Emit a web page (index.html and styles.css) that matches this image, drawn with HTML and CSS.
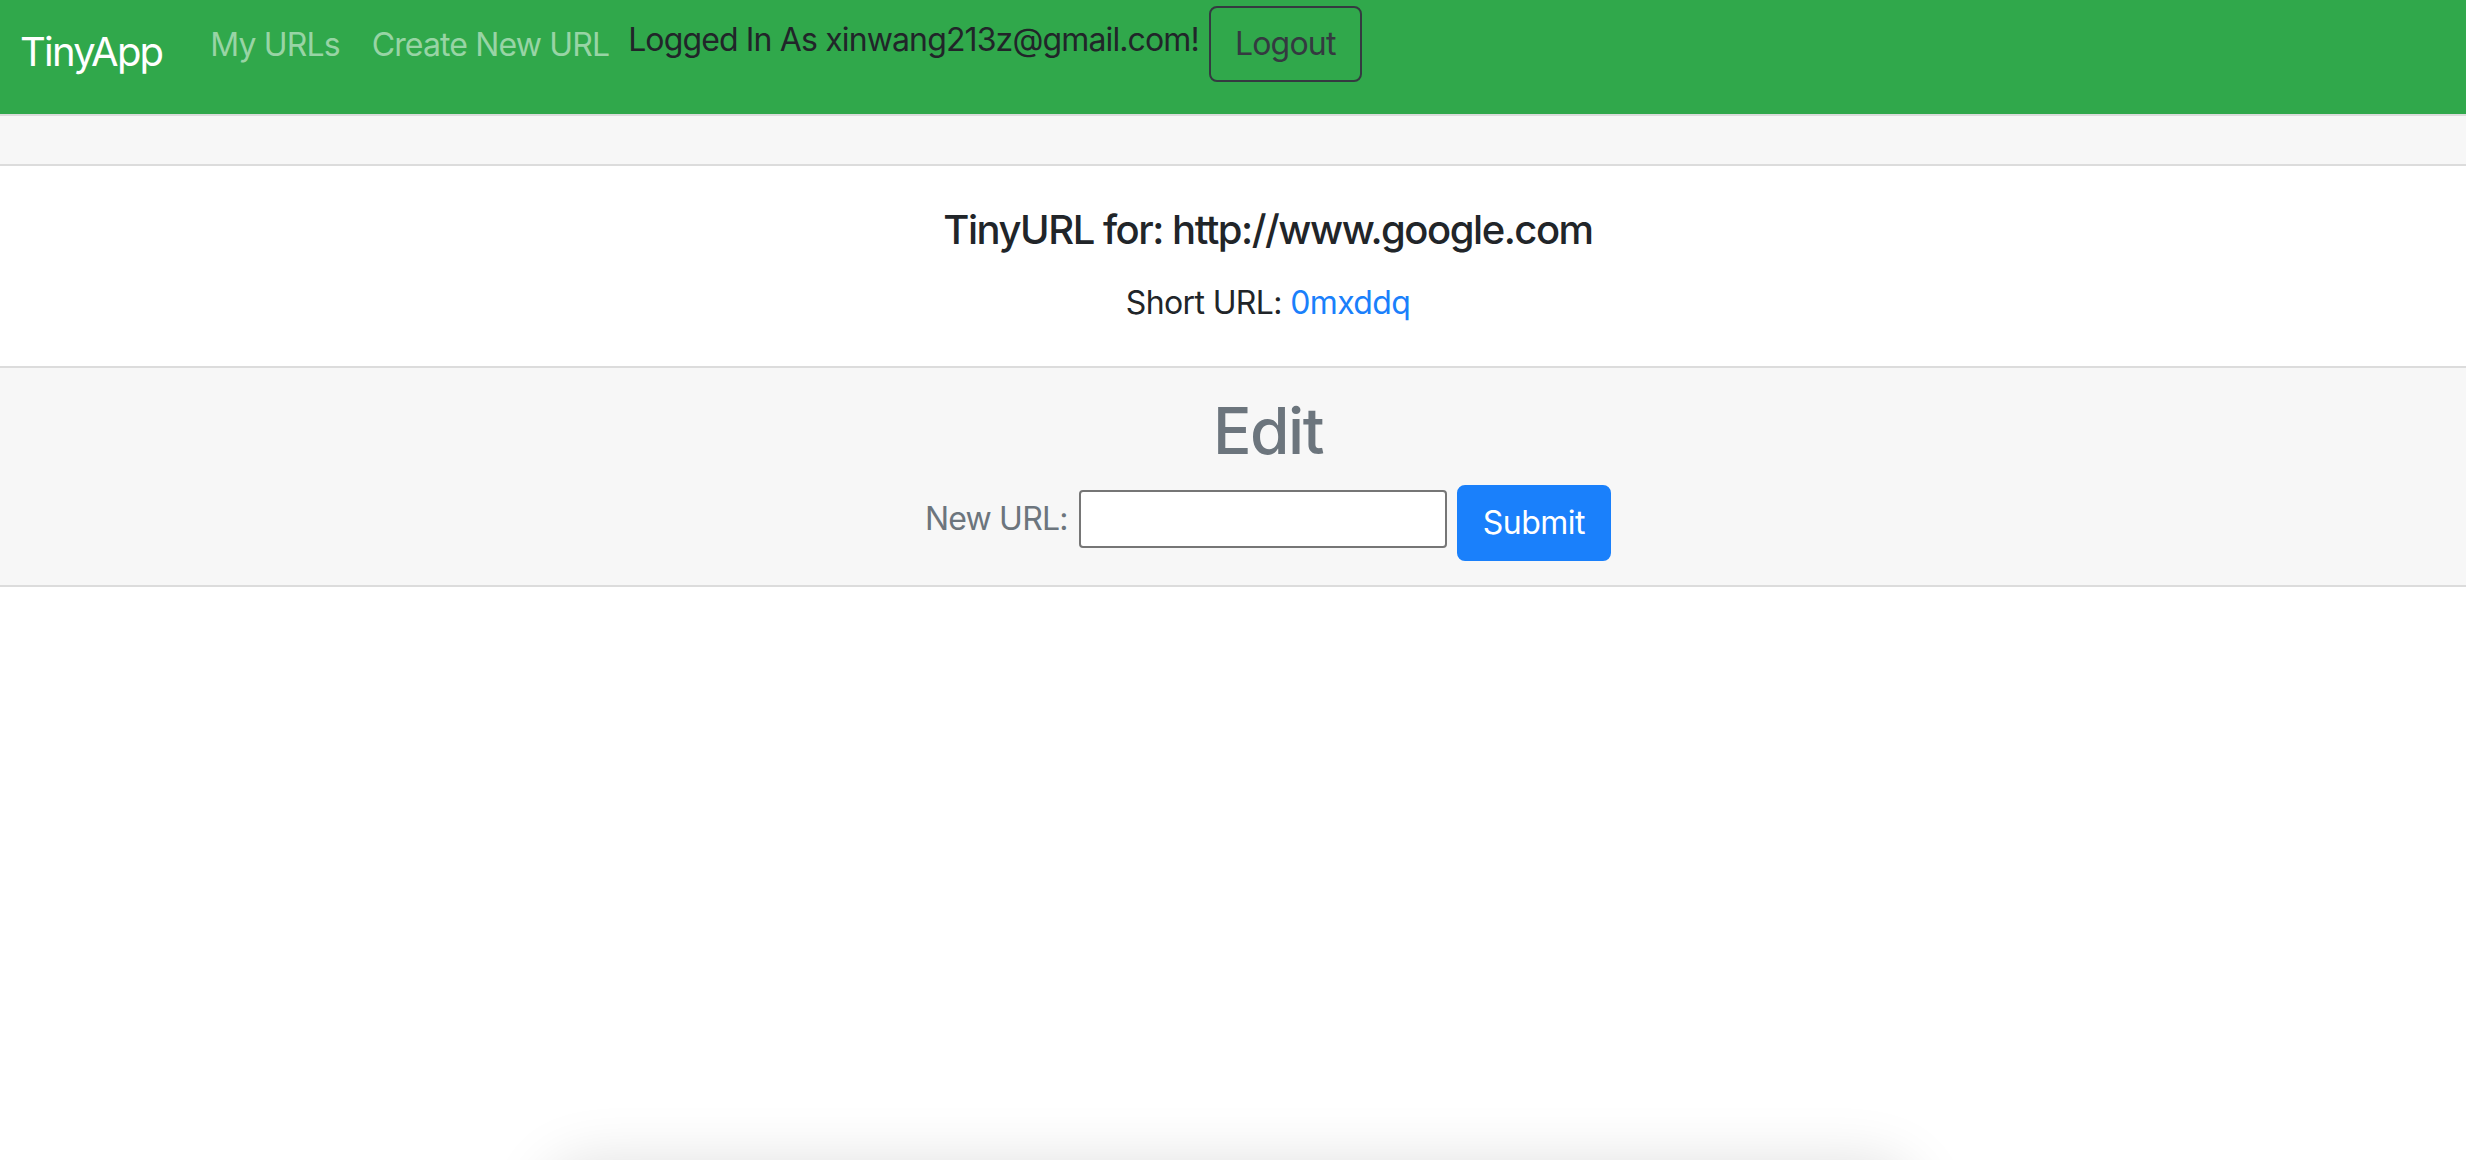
FILE: index.html
```html
<!DOCTYPE html>
<html lang="en">
<head>
<meta charset="utf-8">
<title>TinyApp</title>
<link rel="stylesheet" href="styles.css">
</head>
<body>
<nav class="navbar">
  <a class="brand" href="#">TinyApp</a>
  <a class="nav-link" href="#">My URLs</a>
  <a class="nav-link" href="#">Create New URL</a>
  <span class="logged">Logged In As xinwang213z@gmail.com!</span>
  <form class="logout-form">
    <button class="btn-logout" type="button">Logout</button>
  </form>
</nav>
<main class="card">
  <div class="card-header"></div>
  <div class="card-body">
    <h5 class="card-title">TinyURL for: http://www.google.com</h5>
    <p class="card-text">Short URL: <a class="short-link" href="#">0mxddq</a></p>
  </div>
  <div class="card-footer">
    <h2 class="edit-title">Edit</h2>
    <form class="edit-form">
      <label class="edit-label" for="newurl">New URL:</label>
      <input class="edit-input" id="newurl" type="text">
      <button class="btn-submit" type="button">Submit</button>
    </form>
  </div>
</main>
<div class="window-shadow"></div>
</body>
</html>
```

FILE: styles.css
```css
html, body {
  margin: 0;
  padding: 0;
  background: #ffffff;
  font-family: Inter, "Noto Sans", "Liberation Sans", sans-serif;
  color: #212529;
  overflow: hidden;
}

a { text-decoration: none; }

.navbar {
  display: flex;
  align-items: flex-start;
  height: 114px;
  box-sizing: border-box;
  padding: 0 20px;
  background: #30a84b;
}

.brand {
  font-size: 40px;
  line-height: 60px;
  letter-spacing: -0.045em;
  padding-top: 22px;
  margin-right: 32px;
  color: #ffffff;
}

.nav-link {
  font-size: 32px;
  line-height: 48px;
  letter-spacing: -0.027em;
  padding: 21px 16px 0;
  color: #98d4a5;
}

.logged {
  font-size: 32px;
  line-height: 48px;
  letter-spacing: -0.027em;
  padding-top: 16px;
  margin-left: 3px;
  color: #212529;
}

.logout-form {
  margin: 6px 0 0 10px;
}

.btn-logout {
  font-family: inherit;
  font-size: 32px;
  line-height: 48px;
  letter-spacing: -0.025em;
  padding: 12px 24px;
  border: 2px solid #343a40;
  border-radius: 8px;
  background: transparent;
  color: #343a40;
  cursor: pointer;
}

.card {
  display: block;
  border-top: 2px solid #dcdcdc;
  border-bottom: 2px solid #dcdcdc;
}

.card-header {
  height: 48px;
  background: #f7f7f7;
  border-bottom: 2px solid #dcdcdc;
}

.card-body {
  padding: 40px 40px 39px 110px;
  text-align: center;
  background: #ffffff;
}

.card-title {
  font-size: 40px;
  line-height: 48px;
  font-weight: 500;
  letter-spacing: -0.037em;
  margin: 0 0 25px;
  color: #212529;
}

.card-text {
  font-size: 32px;
  line-height: 48px;
  letter-spacing: -0.02em;
  margin: 0;
}

.short-link {
  color: #1a80fb;
}

.card-footer {
  background: #f7f7f7;
  border-top: 2px solid #dcdcdc;
  padding: 24px 40px 24px 110px;
  text-align: center;
}

.edit-title {
  font-size: 64px;
  line-height: 77px;
  font-weight: 500;
  letter-spacing: -0.024em;
  margin: 0 0 16px;
  color: #6c757d;
}

.edit-form {
  display: flex;
  justify-content: center;
  align-items: flex-start;
  height: 76px;
}

.edit-label {
  font-size: 32px;
  line-height: 48px;
  letter-spacing: -0.025em;
  margin-top: 10px;
  color: #6c757d;
}

.edit-input {
  box-sizing: border-box;
  width: 368px;
  height: 58px;
  margin: 5px 0 0 11px;
  border: 2px solid #767676;
  border-radius: 4px;
  background: #ffffff;
  font-size: 26px;
  padding: 2px 6px;
}

.btn-submit {
  font-family: inherit;
  font-size: 32px;
  line-height: 48px;
  letter-spacing: -0.015em;
  padding: 12px 24px;
  margin-left: 10px;
  border: 2px solid #1a80fb;
  border-radius: 8px;
  background: #1a80fb;
  color: #ffffff;
  cursor: pointer;
}

.window-shadow {
  position: fixed;
  left: 560px;
  width: 1340px;
  top: 1178px;
  height: 200px;
  border-radius: 30px;
  background: #ffffff;
  box-shadow: 0 0 60px 16px rgba(0, 0, 0, 0.13);
}
```
